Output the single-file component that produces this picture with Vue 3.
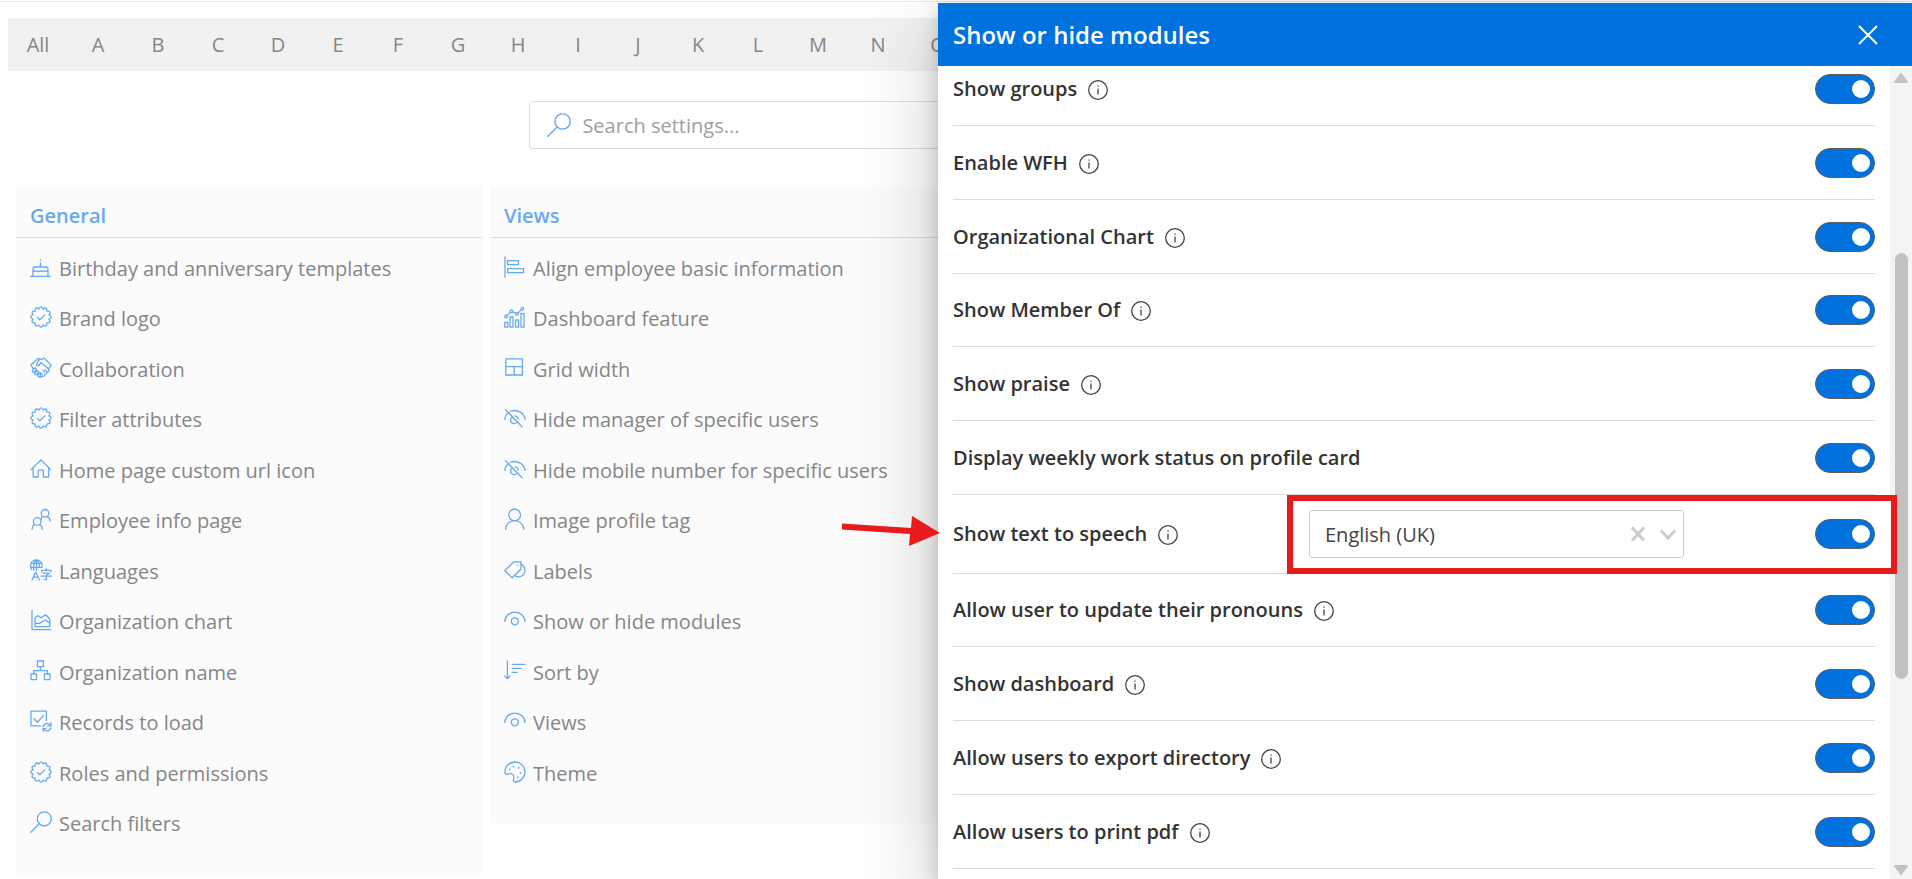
<script setup>
import { ref } from 'vue'

const letters = ['All', ...'ABCDEFGHIJKLMNO']

function scallop(lobes, cx, cy, inner, outer) {
  const at = (turn, r) => {
    const angle = (turn / lobes) * Math.PI * 2
    return `${(cx + r * Math.cos(angle)).toFixed(2)} ${(cy + r * Math.sin(angle)).toFixed(2)}`
  }
  let d = `M${at(-0.5, inner)}`
  for (let k = 0; k < lobes; k++) d += `Q${at(k, outer)} ${at(k + 0.5, inner)}`
  return d + 'Z'
}

const icons = {
  cake: 'M0.5 20.3H20.5M3 20V12.5Q3 11 4.5 11H16.5Q18 11 18 12.5V20M3 14Q4.9 16.6 6.8 14.6Q8.7 16.6 10.5 14.6Q12.4 16.6 14.2 14.6Q16.2 16.6 18 14M10.5 11V6.8M10.5 4V4.4',
  seal: scallop(12, 11, 11, 8.3, 12.4) + 'M7.4 11.4L9.8 13.8L14.8 8.9',
  handshake: 'M1 8L8 1.4L11 2.6L14 1L21.3 8.2L18.5 12L10.8 5.6Q8.8 9.4 6.6 8.4Q6 7 9.4 2.6M18.5 12L19.2 13.2Q18.6 15.4 16.8 14.6Q17.2 17.4 14.8 17.2Q14.6 19.8 12.2 19.2Q10.6 21 8.8 19.4M1 8L3 11.4M2.4 13.4L4.6 11Q6.8 11.4 6 13.2L4 15.2Q1.8 15.2 2.4 13.4ZM5 15.8L7 13.6Q9 14 8.2 15.8L6.4 17.6Q4.4 17.8 5 15.8ZM7.8 18L9.6 16Q11.6 16.6 10.6 18.4L9.4 19.6Q7.4 20 7.8 18ZM14.4 14.8L13 13.4M12 17L10.8 15.8M16.8 14.6L14.8 12.4',
  home: 'M1 11.6L11 2L20.8 11.6M3.2 10V19H8.2V12.2H13.4V19H18.6V10',
  people: 'M15 1.5A3.8 3.8 0 1 1 15 9.1A3.8 3.8 0 1 1 15 1.5ZM7.2 9.6A3.8 3.8 0 1 1 7.2 17.2A3.8 3.8 0 1 1 7.2 9.6ZM2 21.2Q2.4 17.4 5 16.6M9.4 16.6Q12 17.4 12.2 21.2M17.2 8.6Q19.8 9.6 20.2 13M11 11.6Q11.4 9.2 12.8 8.6',
  languages: 'M6.4 0.8A5.8 5.8 0 0 1 12.2 7M6.4 0.8A5.8 5.8 0 0 0 1.8 10.2M1 4.4H12M0.8 8.4H12M6.5 0.8V11.4M6.4 0.8Q2.6 4 4 11.2M6.4 0.8Q10.2 4 9.2 8.4M2 21L5.6 13L9.4 21M3.2 18.2H8M11.6 13V11.4H21V13M16.2 9.4V11.2M13 14.2H19.4L16.4 16V20.6H14.4M11 17.2H21.4',
  chart: 'M2 1.5V20.6H20.6M5 9L7.8 6.6L11 8.8L15.6 5.8L19.8 10V17.6H5ZM5 14.4H9.4L15.6 11L19.8 14.4',
  org: 'M7.4 1H13.4V6.6H7.4ZM10.4 6.6V10.6M3.8 14V10.6H17.4V14M1 14H6.6V19.6H1ZM14.4 14H20V19.6H14.4Z',
  records: 'M10.6 15.8H1V1.2H16.4V10.4M4 8.8L7.4 12.2L13.6 5.4M13 16.6Q14 13.4 17 13.4Q19.4 13.4 20.6 15.4M21 12.6V15.8H17.8M21 17.8Q20 20.8 17 20.8Q14.6 20.8 13.4 19M13 21.4V18.6H16',
  search: 'M14.3 0.8A7 7 0 1 1 14.3 14.8A7 7 0 1 1 14.3 0.8ZM9.2 12.8L0.8 21.2',
  align: 'M1 0.8V21.2M3.6 4.6H14.4V8.6H3.6ZM3.6 12.6H19.6V16.6H3.6Z',
  dashboard: 'M0.8 16.4H3.8V21.2H0.8ZM6 11H9V21.2H6ZM11.6 14H14.6V21.2H11.6ZM17 7.6H20V21.2H17ZM2 9.2A1.3 1.3 0 1 1 2 11.8A1.3 1.3 0 1 1 2 9.2ZM7.5 4A1.3 1.3 0 1 1 7.5 6.6A1.3 1.3 0 1 1 7.5 4ZM13 6.6A1.3 1.3 0 1 1 13 9.2A1.3 1.3 0 1 1 13 6.6ZM18.4 1.4A1.3 1.3 0 1 1 18.4 4A1.3 1.3 0 1 1 18.4 1.4ZM3 9.6L6.6 6.2M8.6 5.8L12 7.4M14 7L17.4 3.6',
  grid: 'M1.8 1.8H18.4V18H1.8ZM1.8 9.6H18.4M10.2 9.6V18',
  hide: 'M0.8 12.4Q1.2 7.6 5 5.2M6.8 4.2Q12 2.4 16.6 5.4Q20.6 8 21 12.4M1.4 2.6L18 19.8M8 10.2A3.6 3.6 0 1 0 13.2 15M11 8.8Q14 9.2 14.2 12.2',
  show: 'M0.8 12.4A10.1 9.2 0 0 1 21 12.4M10.8 8.8A3.5 3.5 0 1 1 10.8 15.8A3.5 3.5 0 1 1 10.8 8.8Z',
  person: 'M10.6 1A5.9 5.9 0 1 1 10.6 12.8A5.9 5.9 0 1 1 10.6 1ZM1.6 21.2A9.1 8.6 0 0 1 19.8 21.2',
  tags: 'M0.8 11.8L10 2.8H17V10L8.2 18.8ZM17 5.2Q21 7.2 21 11.8Q20.6 17 15.4 17.8Q12.6 17.8 10.8 16.4M14 6.2V6.4',
  sort: 'M3.4 1V18.6M0.8 16L3.4 18.8L6 16M8.2 4.4H21M8.2 8.4H17M8.2 12.4H13.2',
  palette: 'M10.5 1A10 10 0 1 1 11.4 21Q8.8 21 9.6 17.4Q10.6 13.4 7 12.6Q5.6 12.4 3.6 13.4Q0.8 14 0.8 10.6Q1.4 2 10.5 1ZM5.6 8.2H6V8.6H5.6ZM9.4 5.4H9.8V5.8H9.4ZM14.6 6.6H15V7H14.6ZM16.2 12H16.6V12.4H16.2ZM13.6 16.2H14V16.6H13.6Z',
}

const groups = [
  {
    title: 'General',
    items: [
      ['cake', 'Birthday and anniversary templates'],
      ['seal', 'Brand logo'],
      ['handshake', 'Collaboration'],
      ['seal', 'Filter attributes'],
      ['home', 'Home page custom url icon'],
      ['people', 'Employee info page'],
      ['languages', 'Languages'],
      ['chart', 'Organization chart'],
      ['org', 'Organization name'],
      ['records', 'Records to load'],
      ['seal', 'Roles and permissions'],
      ['search', 'Search filters'],
    ],
  },
  {
    title: 'Views',
    items: [
      ['align', 'Align employee basic information'],
      ['dashboard', 'Dashboard feature'],
      ['grid', 'Grid width'],
      ['hide', 'Hide manager of specific users'],
      ['hide', 'Hide mobile number for specific users'],
      ['person', 'Image profile tag'],
      ['tags', 'Labels'],
      ['show', 'Show or hide modules'],
      ['sort', 'Sort by'],
      ['show', 'Views'],
      ['palette', 'Theme'],
    ],
  },
]

const modules = ref([
  { id: 'groups', label: 'Show groups', info: true, on: true },
  { id: 'wfh', label: 'Enable WFH', info: true, on: true },
  { id: 'orgchart', label: 'Organizational Chart', info: true, on: true },
  { id: 'memberof', label: 'Show Member Of', info: true, on: true },
  { id: 'praise', label: 'Show praise', info: true, on: true },
  { id: 'weekly', label: 'Display weekly work status on profile card', info: false, on: true },
  { id: 'speech', label: 'Show text to speech', info: true, on: true, language: true },
  { id: 'pronouns', label: 'Allow user to update their pronouns', info: true, on: true },
  { id: 'dashboard', label: 'Show dashboard', info: true, on: true },
  { id: 'export', label: 'Allow users to export directory', info: true, on: true },
  { id: 'pdf', label: 'Allow users to print pdf', info: true, on: true },
])
const language = ref('en-GB')
const query = ref('')
</script>

<template>
  <div class="page">
    <main class="settings">
      <nav class="alphabet" aria-label="Filter by letter">
        <a v-for="letter in letters" :key="letter" href="#">{{ letter }}</a>
      </nav>

      <label class="search">
        <svg class="search-icon" viewBox="0 0 22 22" aria-hidden="true"><path :d="icons.search" /></svg>
        <input v-model="query" type="text" placeholder="Search settings..." aria-label="Search settings" />
      </label>

      <div class="groups">
        <section v-for="group in groups" :key="group.title" class="group">
          <h2>{{ group.title }}</h2>
          <ul>
            <li v-for="[icon, text] in group.items" :key="text">
              <a href="#">
                <svg class="icon" viewBox="0 0 22 22" aria-hidden="true"><path :d="icons[icon]" /></svg>
                <span>{{ text }}</span>
              </a>
            </li>
          </ul>
        </section>
      </div>
    </main>

    <aside class="panel" aria-label="Show or hide modules">
      <header class="panel-header">
        <h1>Show or hide modules</h1>
        <button type="button" class="close" aria-label="Close">
          <svg viewBox="0 0 20 20" aria-hidden="true"><path d="M1 1L19 19M19 1L1 19" /></svg>
        </button>
      </header>

      <div class="panel-body">
        <ul class="modules">
          <li v-for="item in modules" :key="item.id" :class="{ tall: item.language }">
            <label :for="item.id">{{ item.label }}</label>
            <button v-if="item.info" type="button" class="info" :aria-label="'About ' + item.label">
              <svg viewBox="0 0 20 20" aria-hidden="true">
                <circle cx="10" cy="10" r="9.3" />
                <path d="M10 8.4V14.4M10 5.4V6.8" />
              </svg>
            </button>
            <div v-if="item.language" class="language">
              <select v-model="language" aria-label="Speech language">
                <option value="en-GB">English (UK)</option>
                <option value="en-US">English (US)</option>
              </select>
              <button type="button" class="clear" aria-label="Clear language">
                <svg viewBox="0 0 16 16" aria-hidden="true"><path d="M2 1.5L14 14.5M14 1.5L2 14.5" /></svg>
              </button>
              <svg class="chevron" viewBox="0 0 18 16" aria-hidden="true"><path d="M2 4.5L9 12L16 4.5" /></svg>
            </div>
            <input :id="item.id" v-model="item.on" type="checkbox" role="switch" class="toggle" />
            <span v-if="item.language" class="highlight"></span>
            <svg v-if="item.language" class="pointer" viewBox="0 0 98 30" aria-hidden="true">
              <path d="M0 7.5L0 13.5L68 18L67 30L98 17L70 0L69 12Z" />
            </svg>
          </li>
        </ul>
        <div class="scrollbar" aria-hidden="true">
          <svg viewBox="0 0 16 12"><path d="M8 2L14 10H2Z" /></svg>
          <span class="thumb"></span>
          <svg viewBox="0 0 16 12"><path d="M8 10L14 2H2Z" /></svg>
        </div>
      </div>
    </aside>
  </div>
</template>

<style>
body {
  background: #fff;
}
</style>

<style scoped>
.page {
  position: relative;
  box-sizing: border-box;
  height: 100vh;
  overflow: hidden;
  font-family: "Open Sans", "Noto Sans", sans-serif;
  font-size: 20px;
  color: #868686;
}
.page::before {
  content: "";
  display: block;
  height: 1px;
  margin-top: 1px;
  background: #eee0ee;
}
a {
  color: inherit;
  text-decoration: none;
}
ul {
  list-style: none;
  margin: 0;
  padding: 0;
}
button {
  padding: 0;
  border: 0;
  background: none;
  font: inherit;
}
svg {
  display: block;
  flex: none;
}
.settings {
  padding: 16px 8px 0;
}
.alphabet {
  display: flex;
  height: 53px;
  background: #f1f1f1;
}
.alphabet a {
  width: 60px;
  line-height: 54px;
  text-align: center;
}
.search {
  display: flex;
  align-items: center;
  box-sizing: border-box;
  width: 45%;
  height: 48px;
  margin: 30px auto 37px;
  padding: 0 17px;
  gap: 11px;
  border: 1px solid #dedede;
  border-radius: 3px;
}
.search-icon {
  width: 24px;
  height: 24px;
}
.icon path,
.search-icon path {
  fill: none;
  stroke: #66aaee;
  stroke-width: 1.3;
  stroke-linecap: round;
  stroke-linejoin: round;
}
.search input {
  flex: 1;
  min-width: 0;
  padding: 0;
  border: 0;
  outline: 0;
  background: none;
  font: inherit;
  color: inherit;
}
.search input::placeholder {
  color: #a0a0a0;
  opacity: 1;
}
.groups {
  display: grid;
  grid-template-columns: repeat(4, 1fr);
  align-items: start;
  gap: 8px;
  padding-left: 8px;
}
.group {
  padding-bottom: 25px;
  background: #fbfbfb;
}
.group h2 {
  margin: 0 0 5px;
  padding: 9px 14px 0;
  border-bottom: 1px solid #dcdcdc;
  font-size: 20px;
  font-weight: 600;
  line-height: 42px;
  color: #66aaee;
}
.group li {
  height: 50px;
}
.group li:nth-child(even) {
  height: 51px;
}
.group li a {
  display: flex;
  align-items: center;
  height: 50px;
  gap: 7px;
  padding-left: 14px;
  white-space: nowrap;
}
.icon {
  width: 22px;
  height: 22px;
  margin-bottom: 2px;
}
.panel {
  position: absolute;
  top: 3px;
  right: 0;
  bottom: 0;
  display: flex;
  flex-direction: column;
  width: calc(50% + 18px);
  background: #fff;
  color: #333;
  box-shadow: 0 32px 72px rgba(0, 0, 0, 0.22), 0 6px 18px rgba(0, 0, 0, 0.18);
}
.panel-header {
  position: relative;
  z-index: 1;
  display: flex;
  align-items: center;
  justify-content: space-between;
  flex: none;
  height: 63px;
  padding: 0 34px 0 15px;
  background: #0071dd;
  color: #fff;
}
.panel-header h1 {
  margin: 0;
  font-size: 24px;
  font-weight: 600;
  line-height: 32px;
}
.close svg {
  width: 20px;
  height: 20px;
}
.close path {
  fill: none;
  stroke: #fff;
  stroke-width: 1.8;
}
.panel-body {
  display: flex;
  flex: 1;
  min-height: 0;
}
.modules {
  flex: 1;
  margin: -14px 15px 0;
}
.modules li {
  position: relative;
  display: flex;
  align-items: center;
  box-sizing: border-box;
  height: 74px;
  border-bottom: 1px solid #dcdcdc;
}
.modules li:nth-child(4n) {
  height: 73px;
}
.modules li.tall {
  height: 79px;
}
.modules label {
  font-weight: 600;
  line-height: 28px;
}
.info {
  margin: 2px 0 0 11px;
}
.info svg {
  width: 20px;
  height: 20px;
}
.info circle,
.info path {
  fill: none;
  stroke: #444;
  stroke-width: 1.3;
}
.toggle {
  appearance: none;
  display: flex;
  align-items: center;
  justify-content: flex-end;
  box-sizing: border-box;
  width: 60px;
  height: 30px;
  margin: 0 0 0 auto;
  padding: 0 4px;
  border: 1px solid #605e5c;
  border-radius: 15px;
  background: #0071dd;
}
.toggle::before {
  content: "";
  width: 18px;
  height: 18px;
  border-radius: 50%;
  background: #fff;
}
.toggle:not(:checked) {
  justify-content: flex-start;
  background: #8a8886;
}
.language {
  position: relative;
  width: 375px;
  margin-left: auto;
}
.language + .toggle {
  margin-left: 131px;
}
.language select {
  appearance: none;
  display: block;
  box-sizing: border-box;
  width: 100%;
  height: 48px;
  padding: 0 80px 0 15px;
  border: 1px solid #ccc;
  border-radius: 3px;
  background: #fff;
  font: inherit;
  color: #444;
}
.clear {
  position: absolute;
  top: 16px;
  right: 38px;
}
.clear svg {
  width: 16px;
  height: 16px;
}
.chevron {
  position: absolute;
  top: 16px;
  right: 7px;
  width: 18px;
  height: 16px;
  pointer-events: none;
}
.clear path,
.chevron path {
  fill: none;
  stroke: #ccc;
  stroke-width: 3;
}
.highlight {
  position: absolute;
  top: 0;
  right: -22px;
  bottom: -1px;
  z-index: 2;
  box-sizing: border-box;
  width: 610px;
  border: 6px solid #e71b1b;
  pointer-events: none;
}
.pointer {
  position: absolute;
  top: 21px;
  left: -111px;
  width: 98px;
  height: 30px;
}
.pointer path {
  fill: #e71b1b;
}
.scrollbar {
  display: flex;
  flex-direction: column;
  align-items: center;
  box-sizing: border-box;
  width: 22px;
  padding: 6px 0 3px;
  background: #f4f4f4;
}
.scrollbar svg {
  width: 16px;
  height: 12px;
}
.scrollbar path {
  fill: #c1c1c1;
  stroke: #c1c1c1;
  stroke-width: 2;
  stroke-linejoin: round;
}
.thumb {
  width: 13px;
  height: 53%;
  margin: 169px 0 auto;
  border-radius: 7px;
  background: #c1c1c1;
}
</style>
